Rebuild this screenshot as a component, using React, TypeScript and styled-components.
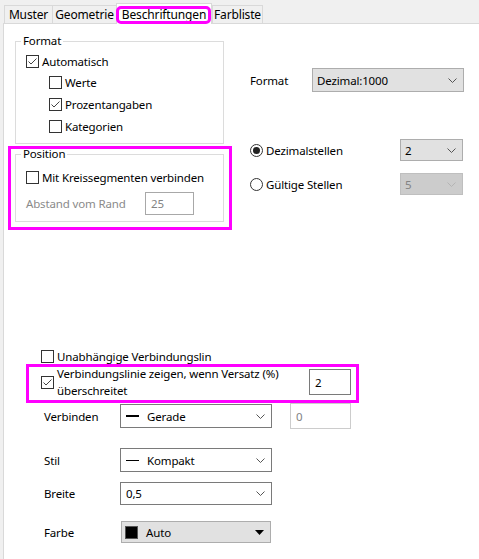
import React from "react";
import styled, { createGlobalStyle, css } from "styled-components";

const FONT = `"Noto Sans", "Open Sans", "DejaVu Sans", sans-serif`;

const GlobalStyle = createGlobalStyle`
  html, body { margin: 0; padding: 0; background: #f0f0f0; }
  * { box-sizing: border-box; }
`;

const Window = styled.div`
  width: 479px;
  height: 559px;
  overflow: hidden;
  background: #f0f0f0;
  font-family: ${FONT};
  font-size: 11.5px;
  letter-spacing: -0.15px;
  color: #000;
  display: flex;
  flex-direction: column;
`;

const TabStrip = styled.div`
  height: 23px;
  display: flex;
  align-items: flex-end;
  padding-left: 4px;
  position: relative;
  z-index: 2;
`;

const Tab = styled.div<{ $w: number; $active?: boolean; $last?: boolean; $marked?: boolean }>`
  position: relative;
  width: ${(p) => p.$w}px;
  height: 18px;
  display: flex;
  align-items: center;
  justify-content: center;
  line-height: 16px;
  font-size: 12px;
  white-space: nowrap;
  background: #f0f0f0;
  border-top: 1px solid #d9d9d9;
  border-left: 1px solid #d9d9d9;
  ${(p) => p.$last && css`border-right: 1px solid #d9d9d9;`}
  ${(p) =>
    p.$active &&
    css`
      height: 21px;
      margin-bottom: -1px;
      background: #fff;
      border-right: 1px solid #d9d9d9;
      padding-top: 1px;
    `}
  ${(p) =>
    p.$marked &&
    css`
      &::after {
        content: "";
        position: absolute;
        top: 2px;
        left: -1px;
        right: 0;
        bottom: 0;
        border: 3px solid #ff00ff;
        border-radius: 5px;
        pointer-events: none;
      }
    `}
`;

const Panel = styled.div`
  flex: 1;
  margin-left: 3px;
  background: #fff;
  border-left: 1px solid #d9d9d9;
  border-top: 1px solid #d9d9d9;
  position: relative;
  z-index: 1;
`;

const TopArea = styled.div`
  display: flex;
  padding: 9px 0 0 11px;
`;

const LeftCol = styled.div`
  width: 209px;
  display: flex;
  flex-direction: column;
  gap: 2px;
`;

const Marked = styled.div<{ $t: number; $r: number; $b: number; $l: number; $fit?: boolean }>`
  position: relative;
  ${(p) => p.$fit && css`align-self: flex-start;`}
  &::after {
    content: "";
    position: absolute;
    top: ${(p) => p.$t}px;
    right: ${(p) => p.$r}px;
    bottom: ${(p) => p.$b}px;
    left: ${(p) => p.$l}px;
    border: 3px solid #ff00ff;
    pointer-events: none;
  }
`;

const Group = styled.fieldset`
  margin: 0;
  padding: 0;
  min-width: 0;
  border: 1px solid #dcdcdc;
`;

const GroupTitle = styled.legend`
  margin-left: 5px;
  padding: 0 2px;
  line-height: 16px;
`;

const GroupBody = styled.div<{ $pt: number; $pb: number }>`
  padding: ${(p) => p.$pt}px 0 ${(p) => p.$pb}px 10px;
  display: flex;
  flex-direction: column;
`;

const CheckRow = styled.div<{ $h: number; $indent?: number; $top?: number }>`
  display: flex;
  align-items: center;
  gap: 3px;
  height: ${(p) => p.$h}px;
  padding-left: ${(p) => p.$indent ?? 0}px;
  margin-top: ${(p) => p.$top ?? 0}px;
  white-space: nowrap;
`;

const Box = styled.span`
  width: 13px;
  height: 13px;
  flex-shrink: 0;
  border: 1px solid #333;
  background: #fff;
  display: flex;
  align-items: center;
  justify-content: center;
`;

const Check = ({ checked }: { checked?: boolean }) => (
  <Box>
    {checked && (
      <svg width="11" height="11" viewBox="0 0 11 11">
        <polyline points="1.5,5.5 4,8 9.5,2.5" fill="none" stroke="#444" strokeWidth="1" />
      </svg>
    )}
  </Box>
);

const RadioCircle = styled.span`
  width: 13px;
  height: 13px;
  flex-shrink: 0;
  border: 1px solid #333;
  border-radius: 50%;
  background: #fff;
  display: flex;
  align-items: center;
  justify-content: center;
`;

const RadioDot = styled.span`
  width: 7px;
  height: 7px;
  border-radius: 50%;
  background: #222;
`;

const Radio = ({ on }: { on?: boolean }) => <RadioCircle>{on && <RadioDot />}</RadioCircle>;

const InlineRow = styled.div<{ $top?: number }>`
  display: flex;
  align-items: center;
  margin-top: ${(p) => p.$top ?? 0}px;
`;

const LabelCell = styled.span<{ $w: number; $muted?: boolean }>`
  width: ${(p) => p.$w}px;
  flex-shrink: 0;
  white-space: nowrap;
  color: ${(p) => (p.$muted ? "#8a8a8a" : "#000")};
`;

type ComboKind = "grey" | "white" | "disabled";

const Combo = styled.div<{ $w: number; $h: number; $kind: ComboKind; $pl?: number }>`
  width: ${(p) => p.$w}px;
  height: ${(p) => p.$h}px;
  flex-shrink: 0;
  display: flex;
  align-items: center;
  padding: 0 6px 0 ${(p) => p.$pl ?? 4}px;
  white-space: nowrap;
  border: 1px solid
    ${(p) => (p.$kind === "grey" ? "#adadad" : p.$kind === "white" ? "#7a7a7a" : "#bfbfbf")};
  background: ${(p) => (p.$kind === "grey" ? "#e1e1e1" : p.$kind === "white" ? "#fff" : "#cccccc")};
  color: ${(p) => (p.$kind === "disabled" ? "#838383" : "#000")};
`;

const ComboText = styled.span`
  flex: 1;
`;

const Chevron = ({ light }: { light?: boolean }) => (
  <svg width="9" height="5" viewBox="0 0 9 5">
    <polyline points="0.5,0.5 4.5,4.5 8.5,0.5" fill="none" stroke={light ? "#b4b4b4" : "#555"} strokeWidth="1" />
  </svg>
);

const Triangle = () => (
  <svg width="9" height="5" viewBox="0 0 9 5">
    <polygon points="0,0 9,0 4.5,5" fill="#000" />
  </svg>
);

const LineSample = styled.span<{ $thick: number }>`
  width: 13px;
  height: ${(p) => p.$thick}px;
  background: #000;
  margin-right: 8px;
  flex-shrink: 0;
`;

const Swatch = styled.span`
  width: 13px;
  height: 13px;
  background: #000;
  border: 1px solid #555;
  margin-right: 8px;
  flex-shrink: 0;
`;

const TextBox = styled.div<{ $w: number; $h: number; $border: string; $ml?: number; $muted?: boolean }>`
  width: ${(p) => p.$w}px;
  height: ${(p) => p.$h}px;
  flex-shrink: 0;
  margin-left: ${(p) => p.$ml ?? 0}px;
  border: 1px solid ${(p) => p.$border};
  background: #fff;
  padding-left: 5px;
  display: flex;
  align-items: center;
  color: ${(p) => (p.$muted ? "#838383" : "#000")};
`;

const RightCol = styled.div`
  margin-left: 26px;
  width: 213px;
  padding-top: 35px;
  display: flex;
  flex-direction: column;
`;

const RadioRow = styled.div<{ $top: number }>`
  display: flex;
  align-items: center;
  height: 22px;
  margin-top: ${(p) => p.$top}px;
`;

const RadioLabel = styled.span`
  margin-left: 3px;
  flex: 1;
  white-space: nowrap;
`;

const Bottom = styled.div`
  margin-top: 125px;
  padding-left: 37px;
  display: flex;
  flex-direction: column;
`;

const WrapRow = styled.div`
  display: flex;
  align-items: center;
  width: 310px;
  height: 34px;
`;

const WrapText = styled.span`
  flex: 1;
  margin-left: 3px;
  line-height: 17px;
  padding-right: 20px;
`;

const FieldRow = styled.div<{ $top: number; $h: number }>`
  display: flex;
  align-items: center;
  height: ${(p) => p.$h}px;
  margin-top: ${(p) => p.$top}px;
  padding-left: 3px;
`;

export default function App() {
  return (
    <>
      <GlobalStyle />
      <Window>
        <TabStrip>
          <Tab $w={48}>Muster</Tab>
          <Tab $w={64}>Geometrie</Tab>
          <Tab $w={96} $active $marked>
            Beschriftungen
          </Tab>
          <Tab $w={51} $last>
            Farbliste
          </Tab>
        </TabStrip>
        <Panel>
          <TopArea>
            <LeftCol>
              <Group>
                <GroupTitle>Format</GroupTitle>
                <GroupBody $pt={2} $pb={6}>
                  <CheckRow $h={20}>
                    <Check checked />
                    <span>Automatisch</span>
                  </CheckRow>
                  <CheckRow $h={22} $indent={23}>
                    <Check />
                    <span>Werte</span>
                  </CheckRow>
                  <CheckRow $h={22} $indent={23}>
                    <Check checked />
                    <span>Prozentangaben</span>
                  </CheckRow>
                  <CheckRow $h={22} $indent={23}>
                    <Check />
                    <span>Kategorien</span>
                  </CheckRow>
                </GroupBody>
              </Group>
              <Marked $t={0} $r={-8} $b={-8} $l={-7}>
                <Group>
                  <GroupTitle>Position</GroupTitle>
                  <GroupBody $pt={5} $pb={6}>
                    <CheckRow $h={20}>
                      <Check />
                      <span>Mit Kreissegmenten verbinden</span>
                    </CheckRow>
                    <InlineRow $top={5}>
                      <LabelCell $w={119} $muted>
                        Abstand vom Rand
                      </LabelCell>
                      <TextBox $w={49} $h={23} $border="#a8a8a8" $muted>
                        25
                      </TextBox>
                    </InlineRow>
                  </GroupBody>
                </Group>
              </Marked>
            </LeftCol>
            <RightCol>
              <InlineRow>
                <LabelCell $w={62}>Format</LabelCell>
                <Combo $w={152} $h={24} $kind="grey">
                  <ComboText>Dezimal:1000</ComboText>
                  <Chevron />
                </Combo>
              </InlineRow>
              <RadioRow $top={47}>
                <Radio on />
                <RadioLabel>Dezimalstellen</RadioLabel>
                <Combo $w={63} $h={22} $kind="grey">
                  <ComboText>2</ComboText>
                  <Chevron />
                </Combo>
              </RadioRow>
              <RadioRow $top={12}>
                <Radio />
                <RadioLabel>Gültige Stellen</RadioLabel>
                <Combo $w={63} $h={22} $kind="disabled">
                  <ComboText>5</ComboText>
                  <Chevron light />
                </Combo>
              </RadioRow>
            </RightCol>
          </TopArea>
          <Bottom>
            <CheckRow $h={18}>
              <Check />
              <span>Unabhängige Verbindungslin</span>
            </CheckRow>
            <Marked $t={-1} $r={-8} $b={-4} $l={-15} $fit>
              <WrapRow>
                <Check checked />
                <WrapText>Verbindungslinie zeigen, wenn Versatz (%) überschreitet</WrapText>
                <TextBox $w={42} $h={26} $border="#7a7a7a">
                  2
                </TextBox>
              </WrapRow>
            </Marked>
            <FieldRow $top={4} $h={26}>
              <LabelCell $w={76}>Verbinden</LabelCell>
              <Combo $w={152} $h={24} $kind="white" $pl={5}>
                <LineSample $thick={2} />
                <ComboText>Gerade</ComboText>
                <Chevron />
              </Combo>
              <TextBox $w={61} $h={26} $border="#cccccc" $ml={18} $muted>
                0
              </TextBox>
            </FieldRow>
            <FieldRow $top={19} $h={24}>
              <LabelCell $w={76}>Stil</LabelCell>
              <Combo $w={152} $h={24} $kind="white" $pl={5}>
                <LineSample $thick={1} />
                <ComboText>Kompakt</ComboText>
                <Chevron />
              </Combo>
            </FieldRow>
            <FieldRow $top={10} $h={23}>
              <LabelCell $w={76}>Breite</LabelCell>
              <Combo $w={152} $h={23} $kind="white" $pl={5}>
                <ComboText>0,5</ComboText>
                <Chevron />
              </Combo>
            </FieldRow>
            <FieldRow $top={16} $h={22}>
              <LabelCell $w={77}>Farbe</LabelCell>
              <Combo $w={150} $h={22} $kind="grey" $pl={3}>
                <Swatch />
                <ComboText>Auto</ComboText>
                <Triangle />
              </Combo>
            </FieldRow>
          </Bottom>
        </Panel>
      </Window>
    </>
  );
}
